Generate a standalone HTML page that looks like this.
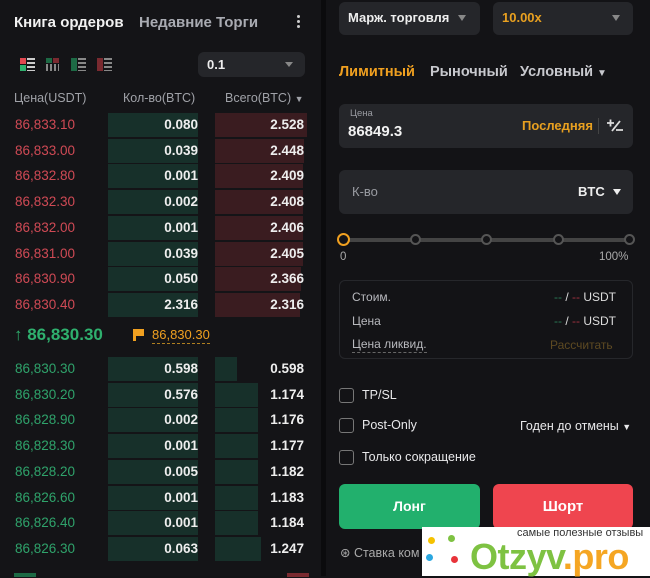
<!DOCTYPE html>
<html><head><meta charset="utf-8"><style>
*{margin:0;padding:0;box-sizing:border-box}
body{width:650px;height:576px;background:#131316;font-family:"Liberation Sans","DejaVu Sans",sans-serif;position:relative;overflow:hidden;color:#e8e8ea}
.a{position:absolute;white-space:nowrap}
.left{position:absolute;left:0;top:0;width:321px;height:576px;background:#141417}
.div{position:absolute;left:321px;top:0;width:5px;height:576px;background:#0b0b0d}
.p{font-size:13.5px;left:15px}
.r{color:#d04a55}.g{color:#2fa36b}
.qb{position:absolute;left:108px;width:90px;height:24px;background:#17302a}
.tb{position:absolute;left:215px;height:24px}
.tr{background:#3a1c20}.tg{background:#17302a}
.num{font-size:13.5px;font-weight:bold;text-align:right;color:#eee}
.box{position:absolute;background:#25262a;border-radius:6px}
.cb{position:absolute;left:339px;width:15px;height:15px;border:1.5px solid #777;border-radius:3px}
.dot{position:absolute;top:234px;width:11px;height:11px;border-radius:50%;background:#131316;border:2px solid #555}
</style></head><body>
<div class="left"></div><div class="div"></div>

<div class="a" style="left:14px;top:14px;font-size:15px;font-weight:bold;color:#f2f2f2">Книга ордеров</div>
<div class="a" style="left:139px;top:14px;font-size:15px;font-weight:bold;color:#a9abb2">Недавние Торги</div>
<div class="a" style="left:297px;top:15px;width:3px;height:3px;background:#ccc;border-radius:50%;box-shadow:0 5px 0 #ccc,0 10px 0 #ccc"></div>

<div class="a" style="left:20px;top:58px;width:6px;height:6px;background:#e04850"></div>
<div class="a" style="left:20px;top:65px;width:6px;height:6px;background:#2fb06e"></div>
<div class="a" style="left:27px;top:58px;width:8px;height:13px;background:repeating-linear-gradient(#ccc 0 2px,transparent 2px 4px)"></div>
<div class="a" style="left:46px;top:58px;width:6px;height:5px;background:#1d6a45"></div>
<div class="a" style="left:53px;top:58px;width:6px;height:5px;background:#7a2a30"></div>
<div class="a" style="left:46px;top:64px;width:13px;height:7px;background:repeating-linear-gradient(90deg,#888 0 2px,transparent 2px 4px)"></div>
<div class="a" style="left:71px;top:58px;width:6px;height:13px;background:#1d6a45"></div>
<div class="a" style="left:78px;top:58px;width:8px;height:13px;background:repeating-linear-gradient(#888 0 2px,transparent 2px 4px)"></div>
<div class="a" style="left:97px;top:58px;width:6px;height:13px;background:#7a2a30"></div>
<div class="a" style="left:104px;top:58px;width:8px;height:13px;background:repeating-linear-gradient(#888 0 2px,transparent 2px 4px)"></div>

<div class="box" style="left:198px;top:52px;width:107px;height:25px"></div>
<div class="a" style="left:207px;top:57px;font-size:13px;font-weight:bold;color:#eee">0.1</div>
<div class="a" style="left:285px;top:62px;border-left:4px solid transparent;border-right:4px solid transparent;border-top:5px solid #888"></div>

<div class="a" style="left:14px;top:91px;font-size:12.5px;color:#a0a2a8">Цена(USDT)</div>
<div class="a" style="left:123px;top:91px;font-size:12.5px;color:#a0a2a8">Кол-во(BTC)</div>
<div class="a" style="left:225px;top:91px;font-size:12.5px;color:#a0a2a8">Всего(BTC) <span style="font-size:9px">▼</span></div>

<div id="asks"></div>
<div class="a" style="left:14px;top:325px;font-size:17px;font-weight:bold;color:#2fb06e">↑ 86,830.30</div>
<div class="a" style="left:133px;top:329px;width:3px;height:12px;background:#f0a020"></div>
<div class="a" style="left:135px;top:329px;width:9px;height:7px;background:#f0a020"></div>
<div class="a" style="left:152px;top:327px;font-size:13px;color:#f0a020;border-bottom:1px dashed #b08020;line-height:16px">86,830.30</div>

<script>
const asks=[["86,833.10","0.080","2.528",92],["86,833.00","0.039","2.448",89],["86,832.80","0.001","2.409",88],["86,832.30","0.002","2.408",88],["86,832.00","0.001","2.406",88],["86,831.00","0.039","2.405",88],["86,830.90","0.050","2.366",86],["86,830.40","2.316","2.316",85]];
const bids=[["86,830.30","0.598","0.598",22],["86,830.20","0.576","1.174",43],["86,828.90","0.002","1.176",43],["86,828.30","0.001","1.177",43],["86,828.20","0.005","1.182",43],["86,826.60","0.001","1.183",43],["86,826.40","0.001","1.184",43],["86,826.30","0.063","1.247",46]];
let h="";
function rows(arr,y0,cls,tcls){arr.forEach((r,i)=>{const y=Math.round(y0+i*25.7);
h+=`<div class="qb" style="top:${y-12}px"></div><div class="tb ${tcls}" style="top:${y-12}px;width:${r[3]}px"></div>`;
h+=`<div class="a p ${cls}" style="top:${y-8}px">${r[0]}</div>`;
h+=`<div class="a num" style="left:120px;width:78px;top:${y-8}px">${r[1]}</div>`;
h+=`<div class="a num" style="left:220px;width:84px;top:${y-8}px">${r[2]}</div>`;});}
rows(asks,125,"r","tr");rows(bids,369,"g","tg");
document.getElementById("asks").outerHTML=h;
</script>
<div class="a" style="left:14px;top:573px;width:22px;height:4px;background:#1d6a45"></div>
<div class="a" style="left:287px;top:573px;width:22px;height:4px;background:#7a2a30"></div>

<div class="box" style="left:339px;top:2px;width:141px;height:33px"></div>
<div class="a" style="left:348px;top:10px;font-size:13px;font-weight:bold;color:#eee">Марж. торговля</div>
<div class="a" style="left:458px;top:15px;border-left:4px solid transparent;border-right:4px solid transparent;border-top:6px solid #888"></div>
<div class="box" style="left:493px;top:2px;width:140px;height:33px"></div>
<div class="a" style="left:502px;top:10px;font-size:13px;font-weight:bold;color:#e8a020">10.00x</div>
<div class="a" style="left:612px;top:15px;border-left:4px solid transparent;border-right:4px solid transparent;border-top:6px solid #888"></div>

<div class="a" style="left:339px;top:64px;font-size:14.5px;font-weight:bold;color:#f0a020">Лимитный</div>
<div class="a" style="left:430px;top:64px;font-size:14.5px;font-weight:bold;color:#c8c9ce">Рыночный</div>
<div class="a" style="left:520px;top:64px;font-size:14.5px;font-weight:bold;color:#c8c9ce">Условный <span style="font-size:10px">▼</span></div>

<div class="box" style="left:339px;top:104px;width:294px;height:44px"></div>
<div class="a" style="left:350px;top:108px;font-size:9.5px;color:#9a9ca2">Цена</div>
<div class="a" style="left:348px;top:123px;font-size:15px;font-weight:bold;color:#f2f2f2">86849.3</div>
<div class="a" style="left:522px;top:118px;font-size:13px;font-weight:bold;color:#e8a020">Последняя</div>
<div class="a" style="left:598px;top:118px;width:1px;height:16px;background:#444"></div>
<svg class="a" style="left:606px;top:118px" width="18" height="16" viewBox="0 0 18 16"><path d="M1 5h7M4.5 1.5v7M14 3L6 13M10 12h7" stroke="#ddd" stroke-width="1.8" fill="none"/></svg>

<div class="box" style="left:339px;top:170px;width:294px;height:44px"></div>
<div class="a" style="left:352px;top:184px;font-size:13px;color:#9a9ca2">К-во</div>
<div class="a" style="left:578px;top:184px;font-size:13px;font-weight:bold;color:#eee">BTC</div>
<div class="a" style="left:613px;top:189px;border-left:4.5px solid transparent;border-right:4.5px solid transparent;border-top:6px solid #eee"></div>

<div class="a" style="left:345px;top:238px;width:285px;height:4px;background:#444;border-radius:2px"></div>
<div class="dot" style="left:337px;top:233px;width:13px;height:13px;border-color:#f0a020;border-width:2.5px"></div>
<div class="dot" style="left:410px"></div>
<div class="dot" style="left:481px"></div>
<div class="dot" style="left:553px"></div>
<div class="dot" style="left:624px"></div>
<div class="a" style="left:340px;top:251px;font-size:11.5px;color:#aaa">0</div>
<div class="a" style="left:599px;top:251px;font-size:11.5px;color:#aaa">100%</div>

<div class="a" style="left:339px;top:280px;width:294px;height:79px;border:1px solid #26272b;border-radius:6px"></div>
<div class="a" style="left:352px;top:290px;font-size:12px;color:#b8b9be">Стоим.</div>
<div class="a" style="left:554px;top:290px;font-size:12px;color:#ddd"><span style="color:#2a7a55">--</span> / <span style="color:#a03040">--</span> USDT</div>
<div class="a" style="left:352px;top:314px;font-size:12px;color:#b8b9be">Цена</div>
<div class="a" style="left:554px;top:314px;font-size:12px;color:#ddd"><span style="color:#2a7a55">--</span> / <span style="color:#a03040">--</span> USDT</div>
<div class="a" style="left:352px;top:337px;font-size:12px;color:#b8b9be;border-bottom:1px dashed #666;line-height:15px">Цена ликвид.</div>
<div class="a" style="left:550px;top:338px;font-size:12px;color:#5e4a22">Рассчитать</div>

<div class="cb" style="top:388px"></div>
<div class="a" style="left:362px;top:388px;font-size:12.5px;color:#e8e8ea">TP/SL</div>
<div class="cb" style="top:418px"></div>
<div class="a" style="left:362px;top:418px;font-size:12.5px;color:#e8e8ea">Post-Only</div>
<div class="a" style="left:520px;top:419px;font-size:12.5px;color:#e8e8ea">Годен до отмены <span style="font-size:9px">▼</span></div>
<div class="cb" style="top:450px"></div>
<div class="a" style="left:362px;top:450px;font-size:12.5px;color:#e8e8ea">Только сокращение</div>

<div class="a" style="left:339px;top:484px;width:141px;height:45px;background:#22b06d;border-radius:6px;text-align:center;line-height:45px;font-size:14px;font-weight:bold;color:#fff">Лонг</div>
<div class="a" style="left:493px;top:484px;width:140px;height:45px;background:#ef454f;border-radius:6px;text-align:center;line-height:45px;font-size:15px;font-weight:bold;color:#fff">Шорт</div>
<div class="a" style="left:340px;top:545px;font-size:12.5px;color:#aaa">⊛ Ставка ком</div>

<div class="a" style="left:422px;top:527px;width:228px;height:49px;background:#fff"></div>
<div class="a" style="left:517px;top:527px;font-size:11px;color:#333">самые полезные отзывы</div>
<div class="a" style="left:470px;top:536px;font-size:36px;font-weight:bold;color:#7ec242;letter-spacing:-0.5px">Otzyv<span style="color:#f5a623">.pro</span></div>
<div class="a" style="left:428px;top:537px;width:7px;height:7px;border-radius:50%;background:#f5c200"></div>
<div class="a" style="left:448px;top:535px;width:7px;height:7px;border-radius:50%;background:#7ec242"></div>
<div class="a" style="left:426px;top:554px;width:7px;height:7px;border-radius:50%;background:#2aa7e0"></div>
<div class="a" style="left:451px;top:556px;width:7px;height:7px;border-radius:50%;background:#e8333a"></div>
</body></html>
